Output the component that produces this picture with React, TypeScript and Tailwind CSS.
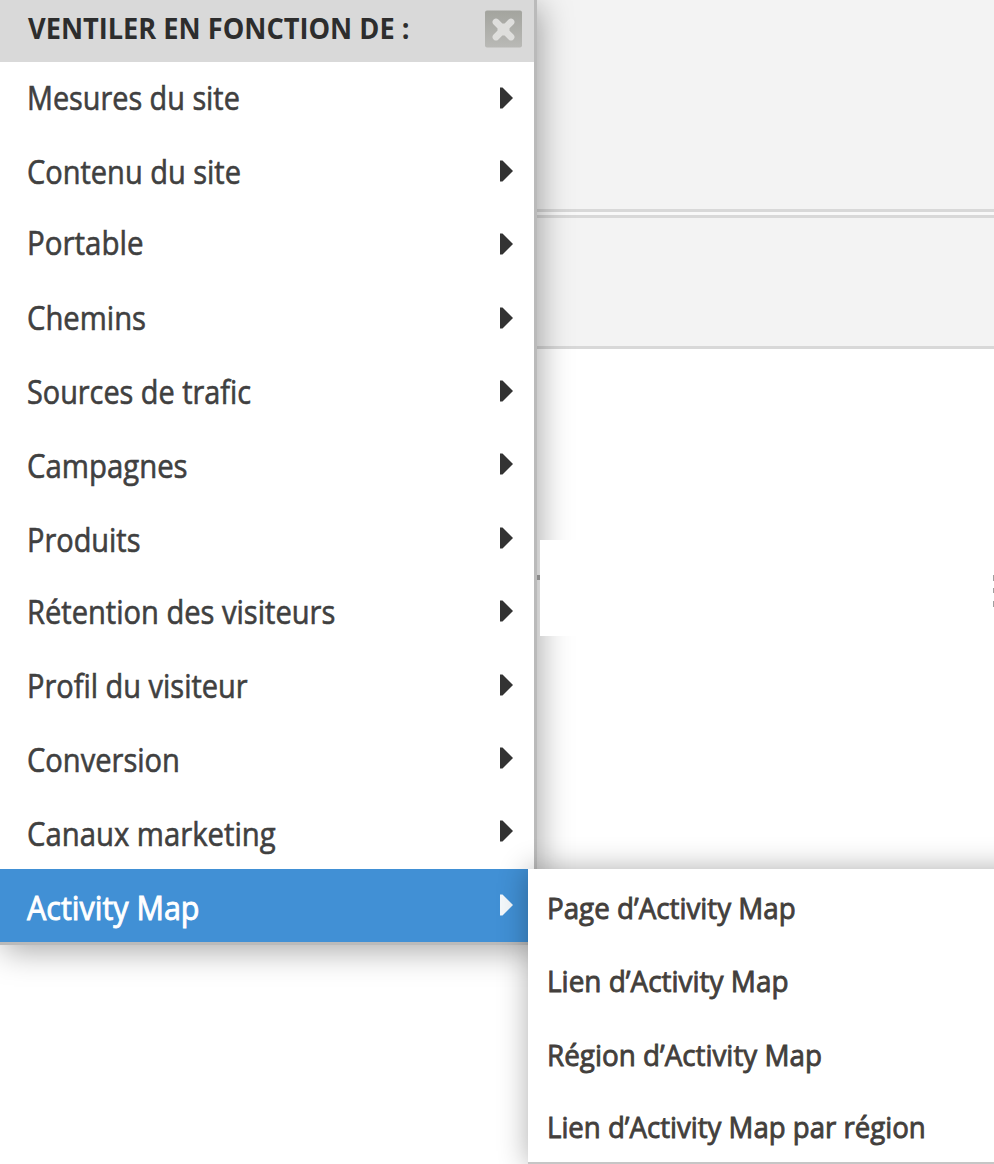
type Item = { label: string; fit: string };

const categories: Item[] = [
  { label: "Mesures du site", fit: "scale-x-[0.9] -translate-y-[1px]" },
  { label: "Contenu du site", fit: "scale-x-[0.906] -translate-y-[0.5px]" },
  { label: "Portable", fit: "scale-x-[0.922] -translate-y-[2px]" },
  { label: "Chemins", fit: "scale-x-[0.913] -translate-y-[1px]" },
  { label: "Sources de trafic", fit: "scale-x-[0.901] -translate-y-[0.5px]" },
  { label: "Campagnes", fit: "scale-x-[0.917] translate-y-[0.5px]" },
  { label: "Produits", fit: "scale-x-[0.904] translate-y-[1px]" },
  { label: "Rétention des visiteurs", fit: "scale-x-[0.909] -translate-y-[0.5px]" },
  { label: "Profil du visiteur", fit: "scale-x-[0.905]" },
  { label: "Conversion", fit: "scale-x-[0.909] translate-y-[1px]" },
  { label: "Canaux marketing", fit: "scale-x-[0.915] translate-y-[1.5px]" },
  { label: "Activity Map", fit: "scale-x-[0.953] translate-y-[2px]" },
];

const dimensions: Item[] = [
  { label: "Page d’Activity Map", fit: "scale-x-[0.925] translate-y-[1.5px]" },
  { label: "Lien d’Activity Map", fit: "scale-x-[0.931] translate-y-[1.5px]" },
  { label: "Région d’Activity Map", fit: "scale-x-[0.927] translate-y-[1.5px]" },
  { label: "Lien d’Activity Map par région", fit: "scale-x-[0.92] translate-y-[1px]" },
];

function Arrow({ active }: { active: boolean }) {
  return (
    <svg
      viewBox="0 0 13 22"
      className={`mr-[21px] h-[22px] w-[13px] -translate-y-[1px] ${active ? "fill-[#f4f8fb]" : "fill-[#333333]"}`}
    >
      <path d="M0 .5h2.5L13 11 2.5 21.5H0z" />
    </svg>
  );
}

function CloseButton() {
  return (
    <button
      aria-label="Fermer"
      className="mr-3 flex h-[37px] w-[37px] -translate-y-[2.5px] items-center justify-center rounded-[2px] bg-linear-to-b from-[#a3a49e] to-[#b9b9b6]"
    >
      <svg viewBox="0 0 37 37" className="h-[37px] w-[37px]">
        <path d="M11 11.5l15 15M26 11.5l-15 15" stroke="#dededc" strokeWidth="6.8" strokeLinecap="round" />
        <circle cx="18.5" cy="19" r="6" fill="#dededc" />
      </svg>
    </button>
  );
}

export default function App() {
  return (
    <div className="relative h-[1164px] w-[994px] overflow-hidden bg-white font-['Open_Sans',sans-serif]">
      <div className="flex flex-col pl-[537px]">
        <div className="h-[209px] bg-[#f3f3f3]" />
        <div className="h-[9px] border-y-[3px] border-[#d8d8d8] bg-[#f8f8f8]" />
        <div className="h-[131px] border-b-[3px] border-[#d8d8d8] bg-[#f3f3f3]" />
      </div>

      <div className="absolute top-0 left-0 w-[537px] border-r-[3px] border-b-[3px] border-[#bababa] bg-white shadow-[3px_6px_30px_rgba(0,0,0,0.34)]">
        <div className="flex h-[62px] items-center justify-between bg-[#d9d9d9] pl-[28px]">
          <span className="origin-left -translate-y-[3px] scale-x-[0.971] text-[28px] font-bold whitespace-nowrap text-[#2d2d2d]">
            VENTILER EN FONCTION DE :
          </span>
          <CloseButton />
        </div>
        <ul>
          {categories.map(({ label, fit }, i) => {
            const active = i === categories.length - 1;
            return (
              <li
                key={label}
                className={`flex h-[73.36px] items-center justify-between pl-[27px] text-[32px] whitespace-nowrap ${active ? "bg-[#4190d5] text-white [-webkit-text-stroke:0.9px_#ffffff]" : "text-[#404040] [-webkit-text-stroke:0.6px_#404040]"}`}
              >
                <span className={`origin-left ${fit}`}>{label}</span>
                <Arrow active={active} />
              </li>
            );
          })}
        </ul>
      </div>

      <div className="absolute top-[540px] left-[540px] h-[96px] w-[60px] bg-white" />
      <div className="absolute top-[575px] left-[537px] h-[5px] w-[3px] bg-[#8b8b8b]" />
      <div className="absolute top-[575px] left-[993px] flex w-px flex-col gap-[7px]">
        <div className="h-[6px] bg-[#a0a0a0]" />
        <div className="h-[5px] bg-[#a0a0a0]" />
        <div className="mt-[1px] h-[6px] bg-[#a0a0a0]" />
      </div>

      <div className="absolute top-[869px] left-[528px] w-[500px] border-b-[3px] border-[#c6c6c6] bg-white shadow-[0_0_28px_rgba(0,0,0,0.32)]">
        <ul>
          {dimensions.map(({ label, fit }) => (
            <li
              key={label}
              className="flex h-[73.25px] items-center pl-[19px] text-[30px] whitespace-nowrap text-[#433f3c] [-webkit-text-stroke:0.9px_#433f3c]"
            >
              <span className={`origin-left ${fit}`}>{label}</span>
            </li>
          ))}
        </ul>
      </div>
    </div>
  );
}
